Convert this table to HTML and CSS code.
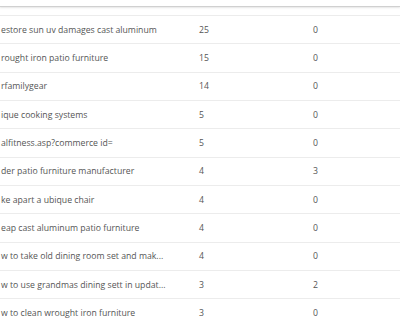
FILE: index.html
```html
<!DOCTYPE html>
<html>
<head>
<meta charset="utf-8">
<link rel="stylesheet" href="styles.css">
</head>
<body>
<div class="page">
  <div class="header"></div>
  <div class="table">
    <div class="row"><span class="c1">estore sun uv damages cast aluminum</span><span class="c2">25</span><span class="c3">0</span></div>
    <div class="row"><span class="c1">rought iron patio furniture</span><span class="c2">15</span><span class="c3">0</span></div>
    <div class="row"><span class="c1">rfamilygear</span><span class="c2">14</span><span class="c3">0</span></div>
    <div class="row"><span class="c1">ique cooking systems</span><span class="c2">5</span><span class="c3">0</span></div>
    <div class="row"><span class="c1">alfitness.asp?commerce id=</span><span class="c2">5</span><span class="c3">0</span></div>
    <div class="row"><span class="c1">der patio furniture manufacturer</span><span class="c2">4</span><span class="c3">3</span></div>
    <div class="row"><span class="c1">ke apart a ubique chair</span><span class="c2">4</span><span class="c3">0</span></div>
    <div class="row"><span class="c1">eap cast aluminum patio furniture</span><span class="c2">4</span><span class="c3">0</span></div>
    <div class="row"><span class="c1">w to take old dining room set and mak...</span><span class="c2">4</span><span class="c3">0</span></div>
    <div class="row"><span class="c1">w to use grandmas dining sett in updat...</span><span class="c2">3</span><span class="c3">2</span></div>
    <div class="row"><span class="c1">w to clean wrought iron furniture</span><span class="c2">3</span><span class="c3">0</span></div>
  </div>
</div>
</body>
</html>
```
FILE: styles.css
```css
html, body {
  margin: 0;
  padding: 0;
  background: #fff;
}
.page {
  width: 400px;
  height: 320px;
  overflow: hidden;
  font-family: "Open Sans", "Noto Sans", sans-serif;
  font-size: 8.7px;
  color: #555;
}
.header {
  height: 6px;
  border-bottom: 1px solid #d0d0d0;
  box-shadow: 0 1px 2px rgba(0,0,0,0.1);
  background: #fff;
}
.table {
  margin-top: 8px;
  border-top: 1px solid #ececec;
}
.row {
  display: flex;
  align-items: center;
  height: 27.33px;
  border-bottom: 1px solid #ececec;
  white-space: nowrap;
}
.c1 {
  width: 198px;
  padding-left: 1px;
  overflow: hidden;
}
.c2 {
  width: 114px;
}
.c3 {
  flex: 1;
}
```
